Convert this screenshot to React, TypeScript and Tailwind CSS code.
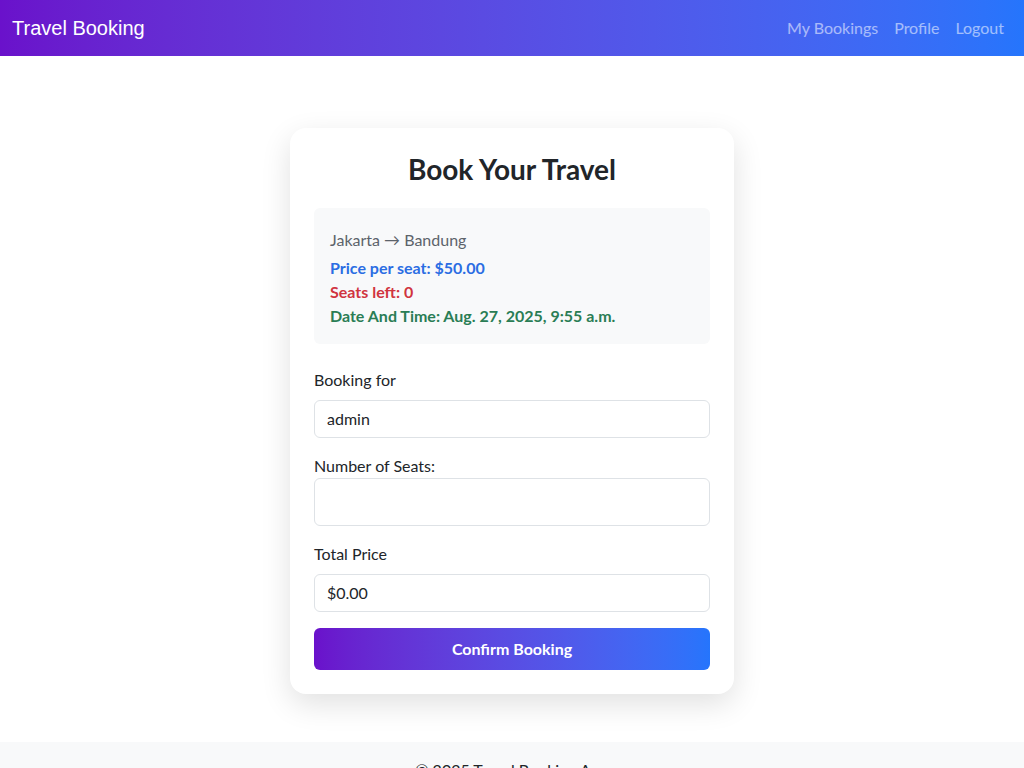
import React from "react"

const uiFont = "font-['Lato','Noto_Sans',sans-serif]"

export default function App() {
  return (
    <div className={`min-h-screen bg-white text-[#212529] ${uiFont}`}>
      {/* Navbar */}
      <nav className="h-14 flex items-center justify-between px-3 bg-gradient-to-r from-[#6a11cb] to-[#2575fc]">
        <span className="text-white text-[20px] font-['Liberation_Sans',Arial,sans-serif]">
          Travel Booking
        </span>
        <div className="flex items-center text-[16px] text-white/55">
          <a className="px-2">My Bookings</a>
          <a className="px-2">Profile</a>
          <a className="px-2">Logout</a>
        </div>
      </nav>

      {/* Booking card */}
      <main className="flex justify-center pt-[72px] pb-12">
        <div className="w-[444px] bg-white rounded-2xl p-6 shadow-[0_10px_30px_rgba(0,0,0,0.12)]">
          <h2 className="text-center text-[28px] leading-[34px] font-bold mb-[22px]">
            Book Your Travel
          </h2>

          <div className="bg-[#f8f9fa] rounded-md px-4 pt-5 pb-4 mb-6 text-[16px] leading-6">
            <p className="text-[#5c636a] mb-1">Jakarta → Bandung</p>
            <p className="text-[#2b6de3] font-bold">Price per seat: $50.00</p>
            <p className="text-[#d0343f] font-bold">Seats left: 0</p>
            <p className="text-[#2a7d55] font-bold">Date And Time: Aug. 27, 2025, 9:55 a.m.</p>
          </div>

          <div className="flex flex-col gap-4 text-[16px] leading-6">
            <div>
              <label className="block mb-2">Booking for</label>
              <div className="h-[38px] border border-[#dee2e6] rounded-md px-3 flex items-center">
                admin
              </div>
            </div>
            <div>
              <label className="block mb-0">Number of Seats:</label>
              <div className="h-[48px] border border-[#dee2e6] rounded-md px-3" />
            </div>
            <div>
              <label className="block mb-2">Total Price</label>
              <div className="h-[38px] border border-[#dee2e6] rounded-md px-3 flex items-center">
                $0.00
              </div>
            </div>
            <button className="h-[42px] w-full rounded-md text-white font-bold bg-gradient-to-r from-[#6a11cb] to-[#2575fc]">
              Confirm Booking
            </button>
          </div>
        </div>
      </main>

      {/* Footer */}
      <footer className="bg-[#f8f9fa] py-4 text-center text-[16px]">
        © 2025 Travel Booking App
      </footer>
    </div>
  )
}
